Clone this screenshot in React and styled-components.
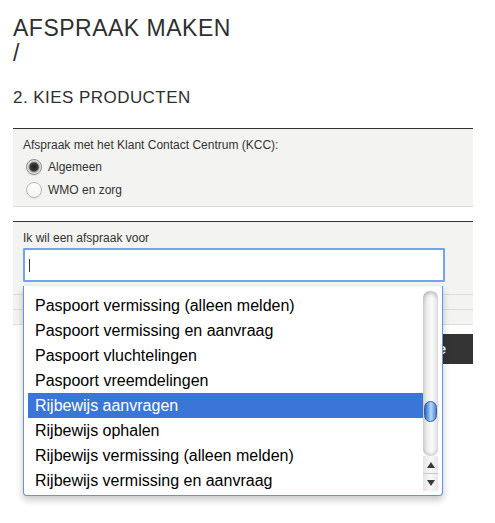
import React from 'react';
import styled, { createGlobalStyle } from 'styled-components';

const GlobalStyle = createGlobalStyle`
  html, body {
    margin: 0;
    padding: 0;
    background: #ffffff;
  }
  body {
    min-height: 523px;
    font-family: "Liberation Sans", Arial, Helvetica, sans-serif;
    color: #333333;
  }
`;

const Page = styled.div`
  width: 473px;
  min-height: 523px;
  box-sizing: border-box;
  padding: 16px 0 0 13px;
`;

const Title = styled.h1`
  margin: 0;
  font-size: 23px;
  line-height: 25px;
  font-weight: normal;
  letter-spacing: 0.5px;
  color: #2f2f2f;
`;

const Subtitle = styled.h2`
  margin: 22px 0 0;
  font-size: 17px;
  line-height: 20px;
  font-weight: normal;
  letter-spacing: 0.45px;
  color: #2f2f2f;
`;

const Panel = styled.section`
  margin-top: ${(p) => p.$gap}px;
  border-top: 1px solid #333333;
  border-bottom: 1px solid #dcdcda;
  background: #f3f3f1;
  padding: 9px 10px ${(p) => p.$bottom}px;
`;

const Label = styled.div`
  font-size: 12px;
  line-height: 15px;
  margin-bottom: 2px;
`;

const RadioRow = styled.label`
  display: flex;
  align-items: center;
  height: 23px;
  font-size: 12px;
  gap: 6px;
  padding-left: 3px;
`;

const RadioDot = styled.span`
  width: 16px;
  height: 16px;
  box-sizing: border-box;
  border-radius: 50%;
  border: 1px solid ${(p) => (p.$checked ? '#8c8c8c' : '#b8b8b8')};
  background: ${(p) =>
    p.$checked
      ? 'radial-gradient(circle, #1f1f1f 0, #3a3a3a 4px, #9a9a9a 5px, #d6d6d6 6px, #ececec 7px)'
      : 'linear-gradient(#ffffff, #f4f4f4)'};
  box-shadow: 0 1px 1px rgba(0, 0, 0, 0.08);
`;

const Combo = styled.div`
  position: relative;
  width: 422px;
`;

const SearchBox = styled.div`
  box-sizing: border-box;
  height: 34px;
  background: #ffffff;
  border: 2px solid #74a5ec;
  border-radius: 1px;
  display: flex;
  align-items: center;
  padding-left: 4px;
`;

const Caret = styled.span`
  width: 1px;
  height: 13px;
  background: #333333;
`;

const Divider = styled.div`
  margin: ${(p) => p.$top}px -10px 0;
  border-top: 1px solid #dcdcda;
`;

const ButtonRow = styled.div`
  display: flex;
  justify-content: flex-end;
  margin-top: 9px;
`;

const NextButton = styled.button`
  height: 30px;
  border: 0;
  background: #333333;
  color: #ffffff;
  font-family: inherit;
  font-weight: bold;
  font-size: 14px;
  padding: 0 27px 0 22px;
`;

const Dropdown = styled.div`
  position: absolute;
  z-index: 2;
  left: 0;
  top: calc(100% + 4px);
  width: 420px;
  height: 210px;
  box-sizing: border-box;
  display: flex;
  background: #ffffff;
  border: 1px solid #5f95e8;
  border-top: 0;
  border-radius: 0 0 4px 4px;
  box-shadow: 0 4px 7px rgba(0, 0, 0, 0.22);
  overflow: hidden;
`;

const List = styled.ul`
  flex: 1;
  list-style: none;
  margin: 0;
  padding: 7px 0 0 4px;
`;

const Item = styled.li`
  height: 25px;
  line-height: 25px;
  padding-left: 7px;
  font-size: 16px;
  color: ${(p) => (p.$selected ? '#ffffff' : '#000000')};
  background: ${(p) => (p.$selected ? '#3a76d7' : 'transparent')};
  white-space: nowrap;
`;

const Scrollbar = styled.div`
  width: 15px;
  margin: 5px 4px 0 0;
  height: 200px;
  display: flex;
  flex-direction: column;
`;

const Track = styled.div`
  position: relative;
  flex: 1;
  border-radius: 7px;
  background: linear-gradient(to right, #cfcfcf, #efefef 30%, #fbfbfb 60%, #e0e0e0);
  box-shadow: inset 0 5px 4px -3px rgba(0, 0, 0, 0.25), inset 0 -4px 4px -3px rgba(0, 0, 0, 0.2);
`;

const Thumb = styled.div`
  position: absolute;
  left: 1px;
  top: 110px;
  width: 13px;
  height: 21px;
  box-sizing: border-box;
  border-radius: 7px;
  border: 1px solid #35609f;
  background: linear-gradient(to right, #3566b8, #7fb1f1 35%, #b7d6fb 55%, #4f86d6);
`;

const ArrowButton = styled.div`
  height: 17px;
  display: flex;
  align-items: center;
  justify-content: center;
  background: linear-gradient(to right, #e4e4e4, #f8f8f8 50%, #e8e8e8);
  border-top: ${(p) => (p.$down ? '1px solid #c8c8c8' : '0')};

  &::after {
    content: '';
    border-left: 4px solid transparent;
    border-right: 4px solid transparent;
    ${(p) => (p.$down ? 'border-top' : 'border-bottom')}: 6px solid #3a3a3a;
  }
`;

const products = [
  'Paspoort vermissing (alleen melden)',
  'Paspoort vermissing en aanvraag',
  'Paspoort vluchtelingen',
  'Paspoort vreemdelingen',
  'Rijbewijs aanvragen',
  'Rijbewijs ophalen',
  'Rijbewijs vermissing (alleen melden)',
  'Rijbewijs vermissing en aanvraag',
];

export default function App() {
  return (
    <>
      <GlobalStyle />
      <Page>
        <Title>
          AFSPRAAK MAKEN
          <br />/
        </Title>
        <Subtitle>2. KIES PRODUCTEN</Subtitle>

        <Panel $gap={20} $bottom={5}>
          <Label>Afspraak met het Klant Contact Centrum (KCC):</Label>
          <RadioRow>
            <RadioDot $checked />
            Algemeen
          </RadioRow>
          <RadioRow>
            <RadioDot />
            WMO en zorg
          </RadioRow>
        </Panel>

        <Panel $gap={14} $bottom={14}>
          <Label>Ik wil een afspraak voor</Label>
          <Combo>
            <SearchBox>
              <Caret />
            </SearchBox>
            <Dropdown>
              <List>
                {products.map((name) => (
                  <Item key={name} $selected={name === 'Rijbewijs aanvragen'}>
                    {name}
                  </Item>
                ))}
              </List>
              <Scrollbar>
                <Track>
                  <Thumb />
                </Track>
                <ArrowButton />
                <ArrowButton $down />
              </Scrollbar>
            </Dropdown>
          </Combo>
          <Divider $top={12} />
          <Divider $top={14} />
        </Panel>

        <ButtonRow>
          <NextButton>Volgende</NextButton>
        </ButtonRow>
      </Page>
    </>
  );
}
